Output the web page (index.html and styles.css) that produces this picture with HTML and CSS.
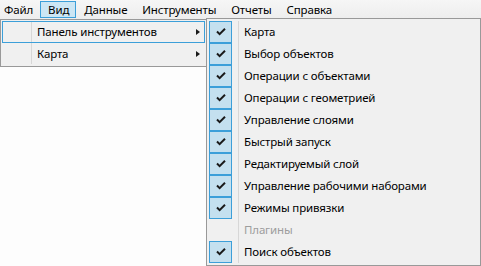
FILE: index.html
```html
<!DOCTYPE html>
<html lang="ru">
<head>
<meta charset="utf-8">
<title>Меню</title>
<link rel="stylesheet" href="styles.css">
</head>
<body>
<div class="menubar">
  <span class="mitem first">Файл</span>
  <span class="mitem open">Вид</span>
  <span class="mitem">Данные</span>
  <span class="mitem">Инструменты</span>
  <span class="mitem">Отчеты</span>
  <span class="mitem">Справка</span>
</div>
<div class="workspace"></div>

<div class="popup popup-view">
  <div class="sep"></div>
  <div class="pitem hot"><span class="plabel">Панель инструментов</span><span class="arrow"></span></div>
  <div class="pitem"><span class="plabel">Карта</span><span class="arrow"></span></div>
</div>

<div class="popup popup-tools">
  <div class="sep"></div>
  <div class="pitem"><span class="check"><svg viewBox="0 0 10 8" width="10" height="8"><path d="M0.3 4.2 L1.7 2.8 L3.6 4.7 L8.3 0.1 L9.7 1.5 L3.6 7.5 Z" fill="#1a1a1a"/></svg></span><span class="plabel">Карта</span></div>
  <div class="pitem"><span class="check"><svg viewBox="0 0 10 8" width="10" height="8"><path d="M0.3 4.2 L1.7 2.8 L3.6 4.7 L8.3 0.1 L9.7 1.5 L3.6 7.5 Z" fill="#1a1a1a"/></svg></span><span class="plabel">Выбор объектов</span></div>
  <div class="pitem"><span class="check"><svg viewBox="0 0 10 8" width="10" height="8"><path d="M0.3 4.2 L1.7 2.8 L3.6 4.7 L8.3 0.1 L9.7 1.5 L3.6 7.5 Z" fill="#1a1a1a"/></svg></span><span class="plabel">Операции с объектами</span></div>
  <div class="pitem"><span class="check"><svg viewBox="0 0 10 8" width="10" height="8"><path d="M0.3 4.2 L1.7 2.8 L3.6 4.7 L8.3 0.1 L9.7 1.5 L3.6 7.5 Z" fill="#1a1a1a"/></svg></span><span class="plabel">Операции с геометрией</span></div>
  <div class="pitem"><span class="check"><svg viewBox="0 0 10 8" width="10" height="8"><path d="M0.3 4.2 L1.7 2.8 L3.6 4.7 L8.3 0.1 L9.7 1.5 L3.6 7.5 Z" fill="#1a1a1a"/></svg></span><span class="plabel">Управление слоями</span></div>
  <div class="pitem"><span class="check"><svg viewBox="0 0 10 8" width="10" height="8"><path d="M0.3 4.2 L1.7 2.8 L3.6 4.7 L8.3 0.1 L9.7 1.5 L3.6 7.5 Z" fill="#1a1a1a"/></svg></span><span class="plabel">Быстрый запуск</span></div>
  <div class="pitem"><span class="check"><svg viewBox="0 0 10 8" width="10" height="8"><path d="M0.3 4.2 L1.7 2.8 L3.6 4.7 L8.3 0.1 L9.7 1.5 L3.6 7.5 Z" fill="#1a1a1a"/></svg></span><span class="plabel">Редактируемый слой</span></div>
  <div class="pitem"><span class="check"><svg viewBox="0 0 10 8" width="10" height="8"><path d="M0.3 4.2 L1.7 2.8 L3.6 4.7 L8.3 0.1 L9.7 1.5 L3.6 7.5 Z" fill="#1a1a1a"/></svg></span><span class="plabel">Управление рабочими наборами</span></div>
  <div class="pitem"><span class="check"><svg viewBox="0 0 10 8" width="10" height="8"><path d="M0.3 4.2 L1.7 2.8 L3.6 4.7 L8.3 0.1 L9.7 1.5 L3.6 7.5 Z" fill="#1a1a1a"/></svg></span><span class="plabel">Режимы привязки</span></div>
  <div class="pitem disabled"><span class="nocheck"></span><span class="plabel">Плагины</span></div>
  <div class="pitem"><span class="check"><svg viewBox="0 0 10 8" width="10" height="8"><path d="M0.3 4.2 L1.7 2.8 L3.6 4.7 L8.3 0.1 L9.7 1.5 L3.6 7.5 Z" fill="#1a1a1a"/></svg></span><span class="plabel">Поиск объектов</span></div>
</div>
</body>
</html>
```

FILE: styles.css
```css
html, body {
  margin: 0;
  padding: 0;
  width: 481px;
  height: 266px;
  overflow: hidden;
  background: #fdfdfd;
  font-family: "Noto Sans", "Open Sans", "DejaVu Sans", sans-serif;
  font-size: 11.5px;
  letter-spacing: -0.15px;
  color: #000;
}

.menubar {
  display: flex;
  height: 19px;
  box-sizing: border-box;
  padding-top: 1px;
  background: linear-gradient(#f6f6f6, #ededed);
}

.mitem {
  height: 17px;
  box-sizing: border-box;
  line-height: 15px;
  padding: 0 6px 0 7px;
  border: 1px solid transparent;
  white-space: nowrap;
}

.mitem.first {
  padding-left: 3px;
}

.mitem.open {
  background: #cce6f4;
  border-color: #3c9fd9;
}

.workspace {
  height: 247px;
}

.popup {
  position: absolute;
  box-sizing: border-box;
  background: #f0f0f0;
  border: 1px solid #999999;
}

.popup-view {
  left: 0;
  top: 19px;
  width: 207px;
  height: 48px;
  padding: 1px;
}

.popup-tools {
  left: 206px;
  top: 18px;
  width: 275px;
  height: 248px;
  padding: 2px;
}

.sep {
  position: absolute;
  top: 2px;
  bottom: 2px;
  width: 1px;
  background: #d7d7d7;
}

.popup-view .sep {
  left: 30px;
}

.popup-tools .sep {
  left: 31px;
}

.pitem {
  position: relative;
  display: flex;
  align-items: center;
  height: 22px;
  box-sizing: border-box;
  white-space: nowrap;
}

.popup-view .pitem {
  border: 1px solid transparent;
  padding-left: 34px;
}

.popup-view .pitem.hot {
  border-color: #3c9fd9;
}

.plabel {
  line-height: 20px;
}

.arrow {
  position: absolute;
  right: 4px;
  top: 7px;
  width: 0;
  height: 0;
  border-top: 3.5px solid transparent;
  border-bottom: 3.5px solid transparent;
  border-left: 4px solid #1a1a1a;
}

.check, .nocheck {
  flex: none;
  width: 23px;
  height: 22px;
  box-sizing: border-box;
  margin-right: 12px;
}

.check {
  display: flex;
  align-items: center;
  justify-content: center;
  background: #c4e0ef;
  border: 1px solid #3c9fd9;
}

.check svg {
  display: block;
  margin-left: 1px;
}

.disabled .plabel {
  color: #9d9d9d;
}
```
